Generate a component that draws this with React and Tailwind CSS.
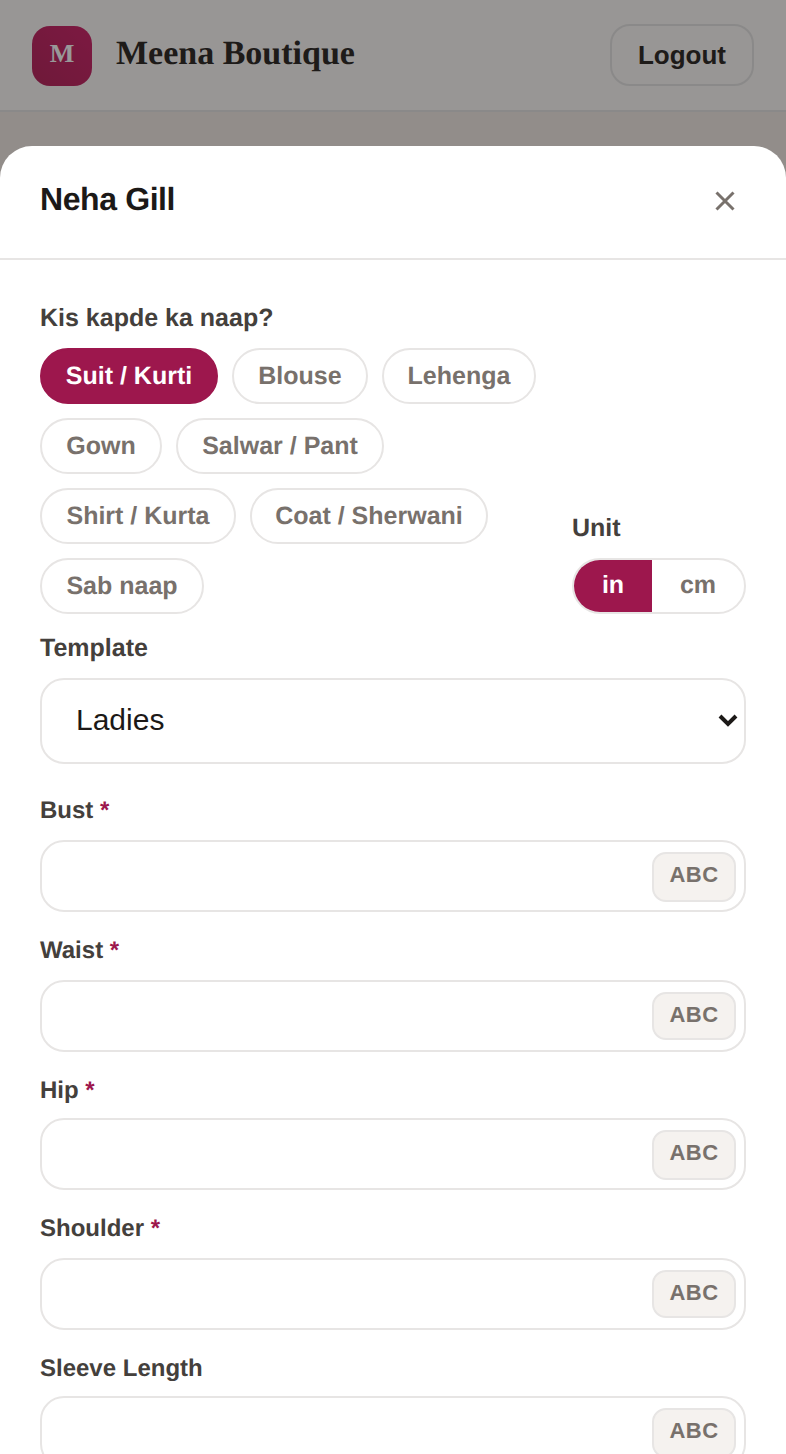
import React from "react";

const chips = [
  ["Suit / Kurti", "w-[178px]"],
  ["Blouse", "w-[136px]"],
  ["Lehenga", "w-[154px]"],
  ["Gown", "w-[122px]"],
  ["Salwar / Pant", "w-[208px]"],
  ["Shirt / Kurta", "w-[196px]"],
  ["Coat / Sherwani", "w-[238px]"],
  ["Sab naap", "w-[164px]"],
];

function Field({ label, required, className, labelGap, btn }) {
  return (
    <div className={className}>
      <div className={`pt-[1px] text-[24px] leading-[30px] font-bold text-[#44403c] ${labelGap}`}>
        {label}
        {required && <span className="text-[#9d174d]"> *</span>}
      </div>
      <div className="h-[72px] rounded-[24px] border-2 border-[#e7e5e4] bg-white flex items-center justify-end pr-[8px]">
        <button className={`w-[84px] rounded-[14px] border-2 border-[#e7e5e4] bg-[#f5f2ef] text-[22px] font-bold tracking-[0.5px] text-[#78716c] ${btn}`}>ABC</button>
      </div>
    </div>
  );
}

export default function App() {
  return (
    <div className="relative h-[1454px] w-[786px] overflow-hidden bg-[#f3ebe6] font-['Liberation_Sans',sans-serif] [text-rendering:geometricPrecision]">
      <header className="h-[112px] border-b-2 border-[#e7e5e4] bg-[#fdfaf8] flex items-center justify-between pl-[32px] pr-[32px]">
        <div className="flex items-center gap-[24px]">
          <div className="mt-[2px] w-[60px] h-[60px] rounded-[18px] bg-gradient-to-tr from-[#b82a60] to-[#d02a6e] flex items-center justify-center pb-[5px] text-white text-[26px] font-bold font-['Liberation_Serif',serif]">M</div>
          <div className="mb-[3px] text-[34px] font-bold text-[#332d2b] font-['Liberation_Serif',serif]">Meena Boutique</div>
        </div>
        <button className="h-[62px] w-[144px] rounded-[20px] border-2 border-[#e7e5e4] text-[26px] font-bold text-[#332d2b]">Logout</button>
      </header>

      <div className="absolute inset-0 bg-black/40 pt-[146px]">
        <div className="bg-white rounded-t-[32px] h-full">
          <div className="h-[114px] border-b-2 border-[#e7e5e4] flex items-center justify-between pl-[40px] pr-[44px]">
            <div className="mb-[6px] text-[32px] font-bold tracking-[-0.4px] text-[#1c1917]">Neha Gill</div>
            <svg className="mb-[3px]" width="34" height="34" viewBox="0 0 34 34" fill="none" stroke="#78716c" strokeWidth="3">
              <path d="M8.5 8.5 L25.5 25.5 M25.5 8.5 L8.5 25.5" />
            </svg>
          </div>

          <div className="px-[40px] pt-[42px]">
            <div className="flex items-end justify-between">
              <div className="w-[510px]">
                <div className="pt-[1px] text-[25px] leading-[30px] font-bold text-[#44403c] mb-[15px]">Kis kapde ka naap?</div>
                <div className="flex flex-wrap gap-[14px]">
                  {chips.map(([c, w], i) => (
                    <div key={c} className={`h-[56px] pt-[2px] rounded-full border-2 flex items-center justify-center text-[25px] font-bold ${w} ${i === 0 ? "bg-[#9d174d] border-[#9d174d] text-white" : "border-[#e7e5e4] text-[#78716c]"}`}>{c}</div>
                  ))}
                </div>
              </div>
              <div className="w-[174px]">
                <div className="text-[25px] leading-[30px] font-bold text-[#44403c] mb-[15px]">Unit</div>
                <div className="h-[56px] rounded-full border-2 border-[#e7e5e4] flex overflow-hidden text-[25px] font-bold">
                  <div className="w-[78px] bg-[#9d174d] text-white flex items-center justify-center">in</div>
                  <div className="flex-1 text-[#78716c] flex items-center justify-center">cm</div>
                </div>
              </div>
            </div>

            <div className="mt-[19px] text-[25px] leading-[30px] font-bold text-[#44403c] mb-[15px]">Template</div>
            <div className="relative">
              <select className="block w-full h-[86px] appearance-none rounded-[24px] border-2 border-[#e7e5e4] bg-white pl-[34px] pb-[4px] text-[30px] text-[#1c1917]">
                <option>Ladies</option>
              </select>
              <svg className="absolute right-[7px] top-[35px]" width="22" height="16" viewBox="0 0 22 16" fill="none" stroke="#1c1917" strokeWidth="4">
                <path d="M3 3 L11 11 L19 3" />
              </svg>
            </div>

            <Field className="mt-[31px]" labelGap="mb-[14px]" label="Bust" required btn="h-[50px] mt-[1px] pb-[5px]" />
            <Field className="mt-[23px]" labelGap="mb-[14px]" label="Waist" required btn="h-[48px] pb-[3px]" />
            <Field className="mt-[23px]" labelGap="mb-[12px]" label="Hip" required btn="h-[50px] mt-[1px] pb-[5px]" />
            <Field className="mt-[23px]" labelGap="mb-[14px]" label="Shoulder" required btn="h-[48px] pb-[3px]" />
            <Field className="mt-[23px]" labelGap="mb-[12px]" label="Sleeve Length" btn="h-[50px] mt-[1px] pb-[5px]" />
          </div>
        </div>
      </div>
    </div>
  );
}
